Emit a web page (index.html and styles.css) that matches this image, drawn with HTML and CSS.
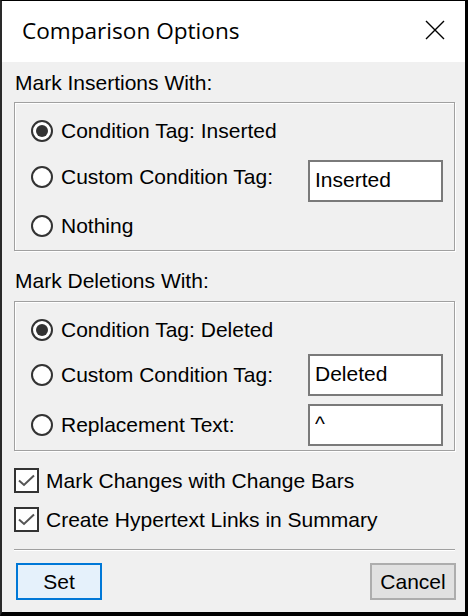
FILE: index.html
```html
<!DOCTYPE html>
<html>
<head>
<meta charset="utf-8">
<link rel="stylesheet" href="styles.css">
</head>
<body>
<div class="window">
  <div class="titlebar">
    <span class="title">Comparison Options</span>
    <svg class="close" width="20" height="20" viewBox="0 0 20 20"><path d="M1 1 L19 19 M19 1 L1 19" stroke="#000" stroke-width="1.4" fill="none"/></svg>
  </div>
  <div class="content">
    <div class="caption first">Mark Insertions With:</div>
    <div class="group">
      <div class="row r40"><span class="radio checked"></span><span class="lbl">Condition Tag: Inserted</span></div>
      <div class="row rfield gap9"><span class="radio"></span><span class="lbl">Custom Condition Tag:</span><input class="field" value="Inserted"></div>
      <div class="row r40 gap4"><span class="radio"></span><span class="lbl">Nothing</span></div>
    </div>
    <div class="caption second">Mark Deletions With:</div>
    <div class="group">
      <div class="row r40"><span class="radio checked"></span><span class="lbl">Condition Tag: Deleted</span></div>
      <div class="row rfield gap4"><span class="radio"></span><span class="lbl">Custom Condition Tag:</span><input class="field" value="Deleted"></div>
      <div class="row rfield gap8"><span class="radio"></span><span class="lbl">Replacement Text:</span><input class="field" value="^"></div>
    </div>
    <div class="checks">
      <div class="check"><svg class="box" width="25" height="25" viewBox="0 0 25 25"><rect x="1" y="1" width="23" height="23" fill="#fff" stroke="#333" stroke-width="2"/><path d="M5 12.5 L10 17 L20 7.5" stroke="#555" stroke-width="2" fill="none"/></svg><span class="lbl">Mark Changes with Change Bars</span></div>
      <div class="check"><svg class="box" width="25" height="25" viewBox="0 0 25 25"><rect x="1" y="1" width="23" height="23" fill="#fff" stroke="#333" stroke-width="2"/><path d="M5 12.5 L10 17 L20 7.5" stroke="#555" stroke-width="2" fill="none"/></svg><span class="lbl">Create Hypertext Links in Summary</span></div>
    </div>
    <div class="separator"></div>
    <div class="buttons">
      <button class="btn default">Set</button>
      <button class="btn">Cancel</button>
    </div>
  </div>
</div>
</body>
</html>
```

FILE: styles.css
```css
* { box-sizing: border-box; }
html, body { margin: 0; padding: 0; background: #000; }
body { width: 468px; height: 616px; overflow: hidden; }
.window {
  width: 468px;
  height: 616px;
  border-top: 1px solid #000;
  border-left: 2px solid #2a2a2a;
  border-right: 3px solid #000;
  border-bottom: 4px solid #000;
  background: #f0f0f0;
  display: flex;
  flex-direction: column;
  font-family: "Liberation Sans", Arial, sans-serif;
  font-size: 21px;
  line-height: 24px;
  color: #000;
}
.titlebar {
  height: 61px;
  background: #fff;
  display: flex;
  align-items: center;
  justify-content: space-between;
  padding: 0 20px 0 20px;
}
.title {
  font-family: "Open Sans", "Noto Sans", sans-serif;
  font-size: 22.6px;
  margin-top: -2px;
}
.close { display: block; margin-top: -3px; }
.content {
  flex: 1;
  padding: 0 10px 0 12px;
  display: flex;
  flex-direction: column;
}
.caption { height: 24px; padding-left: 1px; }
.caption.first { margin-top: 9px; }
.caption.second { margin-top: 18px; }
.group {
  margin-top: 7px;
  border: 1px solid #a0a0a0;
  box-shadow: 1px 1px 0 #fff, inset 1px 1px 0 #fff;
  padding: 8px 11px 4px 17px;
  display: flex;
  flex-direction: column;
}
.caption.second + .group { margin-top: 8px; }
.row { display: flex; align-items: center; }
.r40 { height: 40px; }
.rfield { height: 42px; }
.gap4 { margin-top: 4px; }
.gap8 { margin-top: 8px; }
.gap9 { margin-top: 9px; }
.radio {
  width: 22px;
  height: 22px;
  border-radius: 50%;
  border: 2px solid #333;
  background: #fff;
  flex: none;
  display: flex;
  align-items: center;
  justify-content: center;
  margin-right: 8px;
  margin-left: -1px;
}
.radio.checked::after {
  content: "";
  width: 12px;
  height: 12px;
  border-radius: 50%;
  background: #333;
}
.lbl { white-space: nowrap; }
.field {
  margin-left: auto;
  width: 135px;
  height: 42px;
  border: 2px solid #7a7a7a;
  background: #fff;
  font-family: "Liberation Sans", Arial, sans-serif;
  font-size: 21px;
  line-height: 24px;
  padding: 6px 5px 8px 5px;
  color: #000;
  outline: none;
  flex: none;
}
.gap9 .radio, .gap9 .lbl { margin-bottom: 8px; }
.checks { margin-top: 15px; display: flex; flex-direction: column; gap: 10px; }
.check { height: 29px; display: flex; align-items: center; }
.box { display: block; flex: none; margin-right: 7px; }
.separator {
  margin-top: 15px;
  height: 2px;
  border-top: 1px solid #a0a0a0;
  border-bottom: 1px solid #fff;
}
.buttons {
  margin: 12px -1px 0 2px;
  display: flex;
  justify-content: space-between;
}
.btn {
  width: 86px;
  height: 37px;
  font-family: "Liberation Sans", Arial, sans-serif;
  font-size: 21px;
  line-height: 24px;
  color: #000;
  border: 2px solid #adadad;
  background: #e1e1e1;
  padding: 0;
}
.btn.default {
  border-color: #0078d7;
  background: #e5f1fb;
}
```
